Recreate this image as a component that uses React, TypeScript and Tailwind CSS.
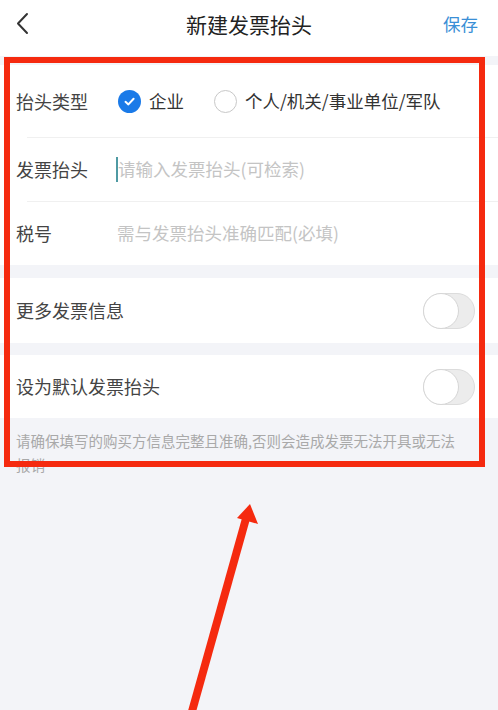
import React from "react";

const font = { fontFamily: '"Noto Sans CJK SC", "Noto Sans", sans-serif' };

function Toggle() {
  return (
    <div className="relative h-[36px] w-[52px] rounded-full border border-[#dcdcdc] bg-[#ececec]">
      <div className="absolute left-[-1px] top-[-1px] h-[36px] w-[36px] rounded-full border border-[#d6d6d6] bg-white" />
    </div>
  );
}

function Radio({ checked }: { checked: boolean }) {
  if (checked) {
    return (
      <span className="flex h-[23px] w-[23px] items-center justify-center rounded-full bg-[#1a7ae8]">
        <svg width="13" height="13" viewBox="0 0 13 13" fill="none">
          <path d="M2.5 6.8 L5.4 9.4 L10.6 3.8" stroke="white" strokeWidth="2" strokeLinecap="round" strokeLinejoin="round" />
        </svg>
      </span>
    );
  }
  return <span className="block h-[23px] w-[23px] rounded-full border-[1.5px] border-[#c8c8c8] bg-white" />;
}

export default function App() {
  return (
    <div className="relative h-[710px] w-[498px] overflow-hidden bg-[#f3f4f8] text-[#333]" style={font}>
      {/* top bar */}
      <header className="relative flex h-[56px] items-center bg-white pl-[14px] pr-[20px]">
        <svg width="20" height="26" viewBox="0 0 20 26" fill="none" className="mt-[-8px]">
          <path d="M13 3 L4 12.5 L13 22" stroke="#333" strokeWidth="2" strokeLinecap="round" strokeLinejoin="round" />
        </svg>
        <h1 className="absolute left-0 right-0 top-[8px] text-center text-[21px] leading-[32px] text-[#222]">新建发票抬头</h1>
        <span className="relative ml-auto mt-[-8px] text-[17.5px] text-[#3a8fd6]">保存</span>
      </header>

      <div className="h-[9px]" />

      {/* invoice header form */}
      <section className="bg-white">
        <div className="flex h-[72px] items-center pl-[16px]">
          <span className="w-[102px] text-[18px] text-[#444]">抬头类型</span>
          <Radio checked />
          <span className="ml-[8px] text-[17.5px] text-[#333]">企业</span>
          <span className="ml-[30px]">
            <Radio checked={false} />
          </span>
          <span className="ml-[8px] text-[17.5px] text-[#333]">个人/机关/事业单位/军队</span>
        </div>
        <div className="ml-[27px] h-px bg-[#f0f0f0]" />
        <div className="flex h-[63px] items-center pl-[16px]">
          <span className="w-[100px] text-[18px] text-[#444]">发票抬头</span>
          <span className="h-[25px] w-[2px] bg-[#4f9aa3]" />
          <span className="text-[17.5px] text-[#c4c4c4]">请输入发票抬头(可检索)</span>
        </div>
        <div className="ml-[27px] h-px bg-[#f0f0f0]" />
        <div className="flex h-[63px] items-center pl-[16px]">
          <span className="w-[101px] text-[18px] text-[#444]">税号</span>
          <span className="text-[17.5px] text-[#c4c4c4]">需与发票抬头准确匹配(必填)</span>
        </div>
      </section>

      <div className="h-[13px]" />

      <section className="flex h-[65px] items-center justify-between bg-white pl-[16px] pr-[23px]">
        <span className="text-[18px] text-[#444]">更多发票信息</span>
        <Toggle />
      </section>

      <div className="h-[12px]" />

      <section className="flex h-[63px] items-center justify-between bg-white pl-[16px] pr-[23px]">
        <span className="text-[18px] text-[#444]">设为默认发票抬头</span>
        <Toggle />
      </section>

      <p className="pl-[16px] pr-[36px] pt-[11px] text-[14.5px] leading-[24px] text-[#a9a9a9]">
        请确保填写的购买方信息完整且准确,否则会造成发票无法开具或无法报销
      </p>

      {/* annotation frame */}
      <div className="pointer-events-none absolute left-[4px] top-[57px] h-[410px] w-[481px] border-[6px] border-[#f52a0f]" />

      {/* annotation arrow */}
      <svg className="pointer-events-none absolute left-0 top-0" width="498" height="710" viewBox="0 0 498 710">
        <line x1="191" y1="715" x2="247" y2="515" stroke="#f52a0f" strokeWidth="8" />
        <polygon points="250,504 258,524 237,518" fill="#f52a0f" />
      </svg>
    </div>
  );
}
